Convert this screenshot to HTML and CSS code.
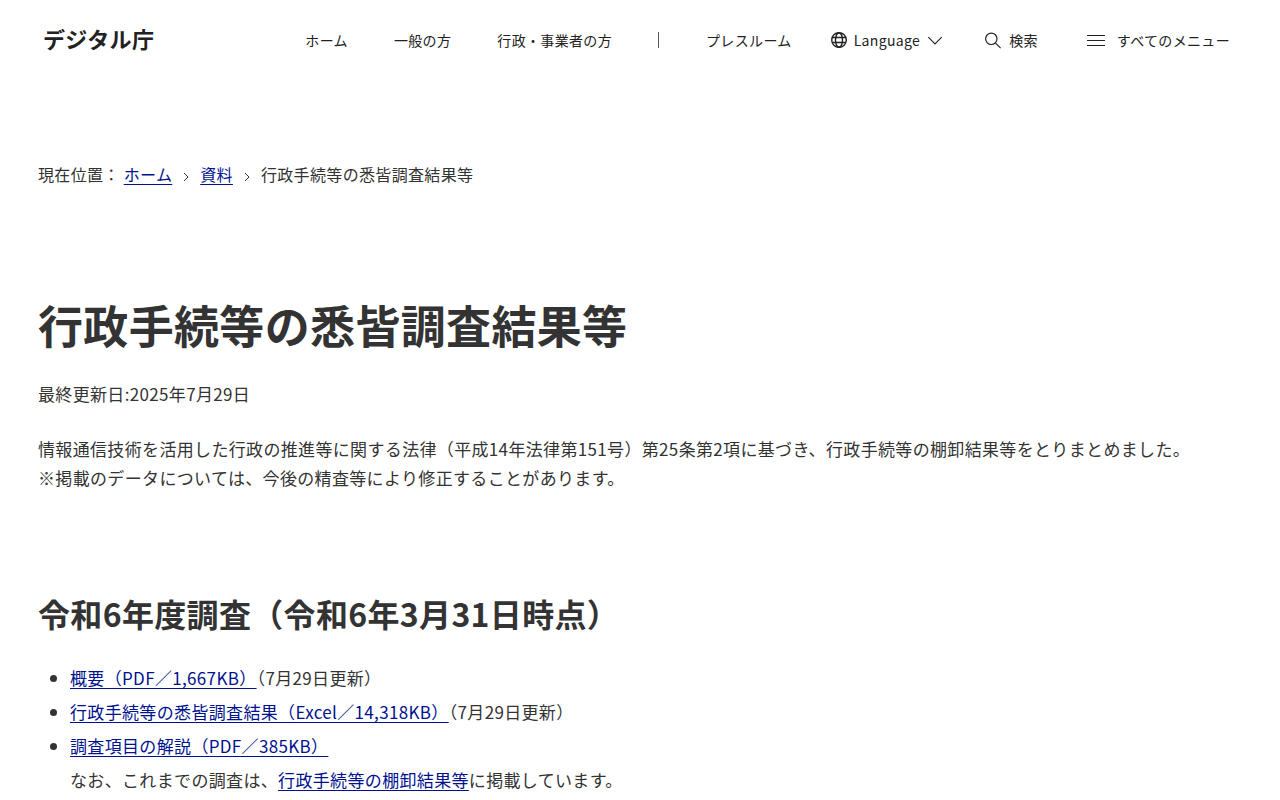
FILE: index.html
```html
<!DOCTYPE html>
<html lang="ja">
<head>
    <meta charset="UTF-8">
    <meta name="viewport" content="width=device-width, initial-scale=1.0">
    <title>行政手続等の悉皆調査結果等｜デジタル庁</title>
    <link rel="stylesheet" href="styles.css">
</head>
<body>

<header class="header">
    <a href="#" class="logo">デジタル庁</a>

    <nav class="nav">
        <ul class="nav-list">
            <li><a href="#">ホーム</a></li>
            <li><a href="#">一般の方</a></li>
            <li><a href="#">行政・事業者の方</a></li>
            <li class="nav-press"><a href="#">プレスルーム</a></li>
        </ul>
        <button type="button" class="language-btn">
            <svg width="18" height="18" viewBox="0 0 18 18" fill="none" stroke="currentColor" stroke-width="1.4">
                <circle cx="9" cy="9" r="7.3"/>
                <ellipse cx="9" cy="9" rx="3.5" ry="7.3"/>
                <path d="M2.4 6.5h13.2M2.4 11.5h13.2"/>
            </svg>
            <span>Language</span>
            <svg width="16" height="16" viewBox="0 0 16 16" fill="none" stroke="currentColor" stroke-width="1.1">
                <path d="M1.3 5.2l6.7 6.7 6.7-6.7"/>
            </svg>
        </button>
        <button type="button" class="search-btn">
            <svg width="18" height="18" viewBox="0 0 18 18" fill="none" stroke="currentColor" stroke-width="1.2">
                <circle cx="7.3" cy="7.8" r="5.7"/>
                <path d="M11.4 11.9l5.2 5.2"/>
            </svg>
            <span>検索</span>
        </button>
        <button type="button" class="menu-btn">
            <svg width="18" height="18" viewBox="0 0 18 18" fill="none" stroke="currentColor">
                <path d="M0 4.5h18M0 9.5h18M0 14.5h18"/>
            </svg>
            <span>すべてのメニュー</span>
        </button>
    </nav>
</header>

<main class="main">
    <nav class="breadcrumb" aria-label="現在位置">
        <span>現在位置：</span>
        <ol>
            <li><a href="#">ホーム</a></li>
            <li>
                <svg width="8" height="12" viewBox="0 0 8 12" fill="none" stroke="currentColor"><path d="M2 4l4 4-4 4"/></svg>
                <a href="#">資料</a>
            </li>
            <li>
                <svg width="8" height="12" viewBox="0 0 8 12" fill="none" stroke="currentColor"><path d="M2 4l4 4-4 4"/></svg>
                <span>行政手続等の悉皆調査結果等</span>
            </li>
        </ol>
    </nav>

    <h1>行政手続等の悉皆調査結果等</h1>
    <p class="updated">最終更新日:2025年7月29日</p>

    <p class="lead">情報通信技術を活用した行政の推進等に関する法律（平成14年法律第151号）第25条第2項に基づき、行政手続等の棚卸結果等をとりまとめました。<br>※掲載のデータについては、今後の精査等により修正することがあります。</p>

    <h2>令和6年度調査（令和6年3月31日時点）</h2>
    <ul class="documents">
        <li><a href="#">概要（PDF／1,667KB）</a>（7月29日更新）</li>
        <li><a href="#">行政手続等の悉皆調査結果（Excel／14,318KB）</a>（7月29日更新）</li>
        <li><a href="#">調査項目の解説（PDF／385KB）</a><br>なお、これまでの調査は、<a href="#">行政手続等の棚卸結果等</a>に掲載しています。</li>
    </ul>
</main>

</body>
</html>
```
FILE: styles.css
```css
* {
    margin: 0;
    padding: 0;
    box-sizing: border-box;
}

body {
    font-family: "Noto Sans CJK JP", sans-serif;
    font-size: 17px;
    line-height: 29px;
    letter-spacing: 0.02em;
    color: #333;
    background-color: #fff;
}

.header {
    display: flex;
    justify-content: space-between;
    align-items: center;
    height: 80px;
    padding: 0 50px 0 43px;
    color: #222;
}

.header a {
    color: inherit;
    text-decoration: none;
}

.header .logo {
    padding-bottom: 3px;
    font-size: 22px;
    font-weight: bold;
}

.nav,
.nav-list {
    display: flex;
    align-items: center;
}

.nav {
    font-size: 14px;
}

.nav-list {
    gap: 46px;
    list-style: none;
}

.nav-press {
    display: flex;
    align-items: center;
}

.nav-press::before {
    content: "";
    width: 1px;
    height: 16px;
    margin-right: 47px;
    background-color: #555;
}

.nav button {
    display: flex;
    align-items: center;
    gap: 7px;
    border: none;
    background: none;
    font: inherit;
    letter-spacing: inherit;
    color: inherit;
    cursor: pointer;
}

.nav .language-btn {
    gap: 6px;
    margin-left: 38px;
}

.nav .language-btn span {
    margin-right: 1px;
}

.nav .search-btn {
    margin-left: 41px;
}

.nav .menu-btn {
    gap: 12px;
    margin-left: 49px;
}

.main {
    padding: 80px 38px 0;
}

.breadcrumb,
.breadcrumb ol,
.breadcrumb li {
    display: flex;
    align-items: center;
}

.breadcrumb {
    gap: 4px;
    font-size: 16px;
}

.breadcrumb ol {
    list-style: none;
    gap: 10px;
}

.breadcrumb li {
    gap: 10px;
}

.main a {
    color: #00118f;
    text-underline-offset: 3px;
}

h1 {
    margin-top: 100px;
    font-size: 45px;
    line-height: 72px;
}

.updated {
    margin-top: 18px;
}

.lead {
    margin-top: 26px;
}

h2 {
    margin-top: 96px;
    font-size: 32px;
    line-height: 50px;
}

.documents {
    margin-top: 23px;
    padding-left: 32px;
    line-height: 34px;
}
```
